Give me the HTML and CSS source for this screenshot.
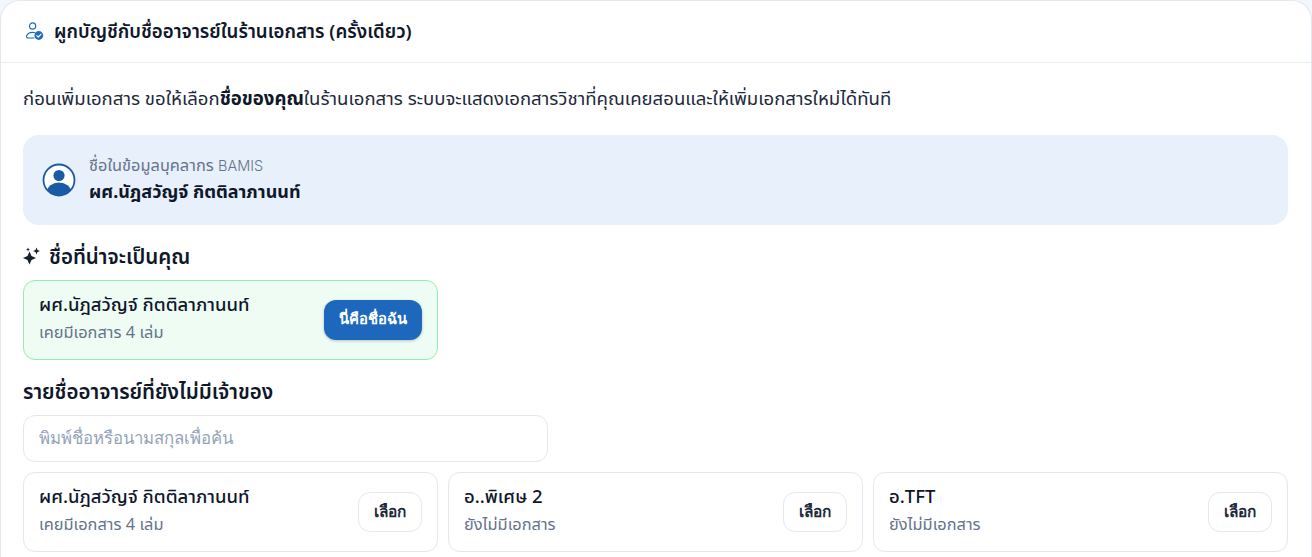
FILE: index.html
```html
<!DOCTYPE html>
<html lang="th">
<head>
<meta charset="utf-8">
<title>ผูกบัญชี</title>
<link rel="stylesheet" href="styles.css">
</head>
<body>
<section class="card">
  <header class="card-head">
    <svg class="head-icon" viewBox="0 0 20 20" width="20" height="20" fill="none">
      <circle cx="8.6" cy="5" r="3.1" stroke="#1f6bbd" stroke-width="1.2"/>
      <path d="M10 17H4.2c-1.2 0-2-1-1.6-2.1C3.4 12.700 5.700 11.300 8.600 11.300c.9 0 1.700.1 2.500.4" stroke="#1f6bbd" stroke-width="1.200" stroke-linecap="round"/>
      <circle cx="14.800" cy="14.500" r="4.400" fill="#1f6bbd"/>
      <path d="M12.800 14.600l1.500 1.500 2.500-2.800" stroke="#fff" stroke-width="1.200" stroke-linecap="round" stroke-linejoin="round"/>
    </svg>
    <h2 class="head-title">ผูกบัญชีกับชื่ออาจารย์ในร้านเอกสาร (ครั้งเดียว)</h2>
  </header>
  <div class="card-body">
    <p class="intro">ก่อนเพิ่มเอกสาร ขอให้เลือก<strong>ชื่อของคุณ</strong>ในร้านเอกสาร ระบบจะแสดงเอกสารวิชาที่คุณเคยสอนและให้เพิ่มเอกสารใหม่ได้ทันที</p>

    <div class="bamis">
      <svg class="bamis-icon" viewBox="0 0 34 34" width="34" height="34">
        <defs><clipPath id="c"><circle cx="17" cy="17" r="15.500"/></clipPath></defs>
        <circle cx="17" cy="17" r="15.500" fill="#fff"/>
        <g clip-path="url(#c)" fill="#1a5ba6">
          <circle cx="17" cy="12.500" r="5.600"/>
          <ellipse cx="17" cy="29" rx="12" ry="9.500"/>
        </g>
        <circle cx="17" cy="17" r="15.500" fill="none" stroke="#1a5ba6" stroke-width="1.800"/>
      </svg>
      <div class="bamis-text">
        <div class="bamis-label">ชื่อในข้อมูลบุคลากร <span class="latin">BAMIS</span></div>
        <div class="bamis-name">ผศ.นัฎสวัญจ์ กิตติลาภานนท์</div>
      </div>
    </div>

    <h3 class="section-title section-likely">
      <svg viewBox="0 0 18 18" width="18" height="18" fill="#14202e">
        <path d="M6.500 4.500l2 4.500 4.500 2-4.500 2-2 4.500-2-4.500-4.500-2 4.500-2z"/>
        <path d="M13.500 .5l1 2.500 2.500 1-2.500 1-1 2.500-1-2.500-2.500-1 2.500-1z"/>
        <path d="M5 .5l.6 1.400 1.400.6-1.400.6-.6 1.400-.6-1.400-1.400-.6 1.400-.6z"/>
      </svg>
      <span>ชื่อที่น่าจะเป็นคุณ</span>
    </h3>

    <div class="person person-match">
      <div class="person-text">
        <div class="person-name">ผศ.นัฎสวัญจ์ กิตติลาภานนท์</div>
        <div class="person-sub">เคยมีเอกสาร 4 เล่ม</div>
      </div>
      <button class="btn-primary" type="button">นี่คือชื่อฉัน</button>
    </div>

    <h3 class="section-title section-list">รายชื่ออาจารย์ที่ยังไม่มีเจ้าของ</h3>

    <input class="search" type="text" placeholder="พิมพ์ชื่อหรือนามสกุลเพื่อค้น">

    <div class="grid">
      <div class="person">
        <div class="person-text">
          <div class="person-name">ผศ.นัฎสวัญจ์ กิตติลาภานนท์</div>
          <div class="person-sub">เคยมีเอกสาร 4 เล่ม</div>
        </div>
        <button class="btn-ghost" type="button">เลือก</button>
      </div>
      <div class="person">
        <div class="person-text">
          <div class="person-name">อ..พิเศษ 2</div>
          <div class="person-sub">ยังไม่มีเอกสาร</div>
        </div>
        <button class="btn-ghost" type="button">เลือก</button>
      </div>
      <div class="person">
        <div class="person-text">
          <div class="person-name">อ.TFT</div>
          <div class="person-sub">ยังไม่มีเอกสาร</div>
        </div>
        <button class="btn-ghost" type="button">เลือก</button>
      </div>
    </div>
  </div>
</section>
</body>
</html>
```
FILE: styles.css
```css
* { box-sizing: border-box; }
html, body { margin: 0; height: 557px; overflow: hidden; }
body {
  background: #f3f6fa;
  font-family: "Noto Sans", "Noto Sans Thai", "Inter", sans-serif;
  color: #0f172a;
}
.card {
  width: 1312px;
  height: 557px;
  background: #fff;
  border: 1px solid #e2e8f0;
  border-bottom: 0;
  border-radius: 20px 20px 0 0;
  overflow: hidden;
}
.card-head {
  height: 62px;
  display: flex;
  align-items: center;
  gap: 10px;
  padding: 0 23px 2px;
  border-bottom: 1px solid #e9eef6;
}
.head-title { margin: 0; font-size: 18.700px; font-weight: 600; line-height: 24px; }
.card-body { padding: 21px 23px 0 22px; }
.intro { margin: 0; font-size: 18.580px; line-height: 28px; color: #1e293b; }
.intro strong { font-weight: 700; color: #0f172a; }
.bamis {
  margin-top: 23px;
  height: 90px;
  background: #e8f0fb;
  border-radius: 16px;
  display: flex;
  align-items: center;
  gap: 13px;
  padding: 0 19px;
}
.bamis-text { padding-bottom: 3px; }
.bamis-label { font-size: 16.400px; line-height: 20px; color: #64748b; }
.latin { font-size: 14.500px; font-family: "Inter", sans-serif; font-weight: 300; }
.bamis-name { font-size: 18px; font-weight: 700; line-height: 24px; margin-top: 3px; }
.section-title { margin: 0; font-size: 20.500px; font-weight: 600; line-height: 26px; }
.section-likely { display: flex; align-items: center; gap: 8px; margin-top: 18px; }
.section-list { margin-top: 18px; }
.person {
  height: 80px;
  background: #fff;
  border: 1px solid #e2e8f0;
  border-radius: 12px;
  display: flex;
  align-items: center;
  justify-content: space-between;
  padding: 0 15px;
}
.person-match {
  width: 415px;
  margin-top: 11px;
  background: #effcf3;
  border-color: #93ecb1;
}
.person-text { padding-bottom: 3px; }
.person-name { font-size: 18.500px; font-weight: 500; line-height: 24px; margin-top: -3px; }
.person-sub { font-size: 16.400px; line-height: 20px; color: #64748b; margin-top: 6px; }
.btn-primary {
  height: 40px;
  padding: 0 15px 2px;
  border: 0;
  border-radius: 12px;
  background: #1d68bc;
  color: #fff;
  font: 600 14.800px "Noto Sans", sans-serif;
  box-shadow: 0 1px 3px rgba(15, 23, 42, .25);
}
.btn-ghost {
  height: 40px;
  width: 64px;
  padding: 0 0 1px;
  border: 1px solid #e2e8f0;
  border-radius: 12px;
  background: #fff;
  color: #1e293b;
  font: 600 15.400px "Noto Sans", sans-serif;
}
.search {
  display: block;
  width: 525px;
  height: 47px;
  margin-top: 11px;
  padding: 0 15px 2px;
  border: 1px solid #e2e8f0;
  border-radius: 12px;
  font: 400 16.800px "Noto Sans", sans-serif;
  outline: none;
}
.search::placeholder { color: #94a3b8; opacity: 1; }
.grid {
  display: grid;
  grid-template-columns: repeat(3, 1fr);
  gap: 10px;
  margin-top: 10px;
}
```
